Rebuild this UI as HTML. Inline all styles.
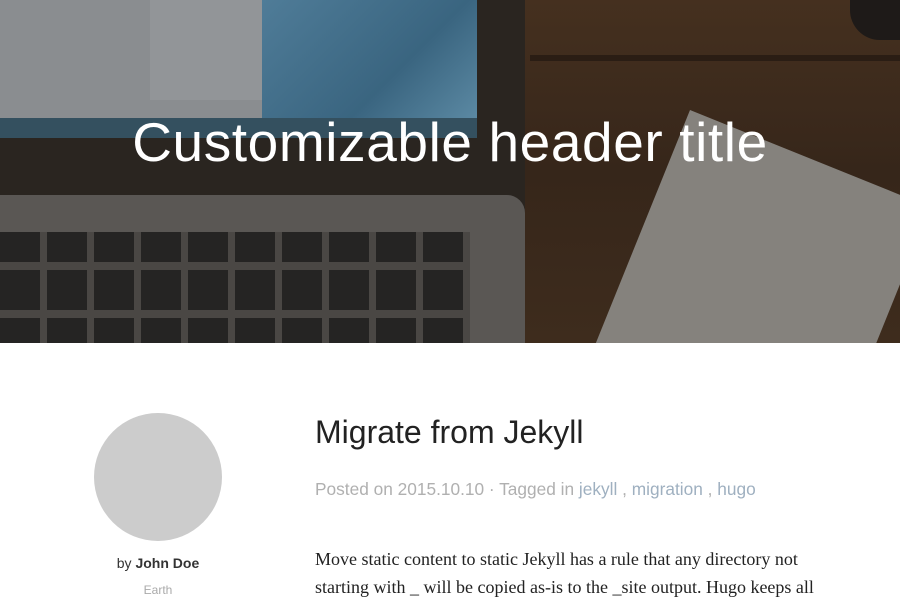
<!DOCTYPE html>
<html><head><style>
*{margin:0;padding:0;box-sizing:border-box}
body{width:900px;height:600px;overflow:hidden;background:#fff;font-family:"Liberation Sans",sans-serif}
.hdr{position:relative;width:900px;height:343px;background:#3a2a20;overflow:hidden}
.hdr div{position:absolute}
h1{position:absolute;left:0;width:900px;top:110px;text-align:center;color:#fff;font-weight:300;font-size:55px;letter-spacing:0.6px}
.av{position:absolute;left:94px;top:413px;width:128px;height:128px;border-radius:50%;background:#ccc}
.by{position:absolute;left:0;width:316px;top:555px;text-align:center;font-size:14px;color:#333}
.earth{position:absolute;left:0;width:316px;top:583px;text-align:center;font-size:12px;color:#aaa}
.t{position:absolute;left:315px;top:414px;font-size:32px;color:#222;font-weight:300}
.m{position:absolute;left:315px;top:479px;font-size:17.3px;color:#b0b0b0}
.m a{color:#9fb0c0}
.b{position:absolute;left:315px;top:545px;width:530px;font-family:"Liberation Serif",serif;font-size:18px;line-height:28px;color:#222}
</style></head><body>
<div class="hdr">
<div style="left:0;top:0;width:525px;height:215px;background:#2a2520"></div>
<div style="left:0;top:0;width:265px;height:128px;background:#8a8d90"></div>
<div style="left:150px;top:0;width:115px;height:100px;background:#929598"></div>
<div style="left:262px;top:0;width:215px;height:130px;background:linear-gradient(135deg,#4f7c98,#3a6580 60%,#5e8ca6)"></div>
<div style="left:0;top:118px;width:477px;height:20px;background:#34505f"></div>
<div style="left:0;top:195px;width:525px;height:148px;background:#5a5754;border-radius:0 18px 0 0"></div>
<div style="left:0;top:232px;width:470px;height:111px;background:repeating-linear-gradient(90deg,#252423 0 40px,#4a4744 40px 47px)"></div>
<div style="left:0;top:262px;width:470px;height:8px;background:#4a4744"></div>
<div style="left:0;top:310px;width:470px;height:8px;background:#4a4744"></div>
<div style="left:525px;top:0;width:375px;height:343px;background:linear-gradient(180deg,#45301f,#36261a 50%,#3e2c1d)"></div>
<div style="left:530px;top:55px;width:370px;height:6px;background:#2a1d14"></div>
<div style="left:690px;top:110px;width:260px;height:300px;background:#85827d;transform:rotate(22deg);transform-origin:0 0"></div>
<div style="left:850px;top:0;width:60px;height:40px;background:#1e1a18;border-radius:0 0 0 30px"></div>
<h1>Customizable header title</h1>
</div>
<div class="av"></div>
<div class="by">by <b>John Doe</b></div>
<div class="earth">Earth</div>
<div class="t">Migrate from Jekyll</div>
<div class="m">Posted on 2015.10.10 · Tagged in <a>jekyll</a> , <a>migration</a> , <a>hugo</a></div>
<div class="b">Move static content to static Jekyll has a rule that any directory not starting with _ will be copied as-is to the _site output. Hugo keeps all</div>
</body></html>
